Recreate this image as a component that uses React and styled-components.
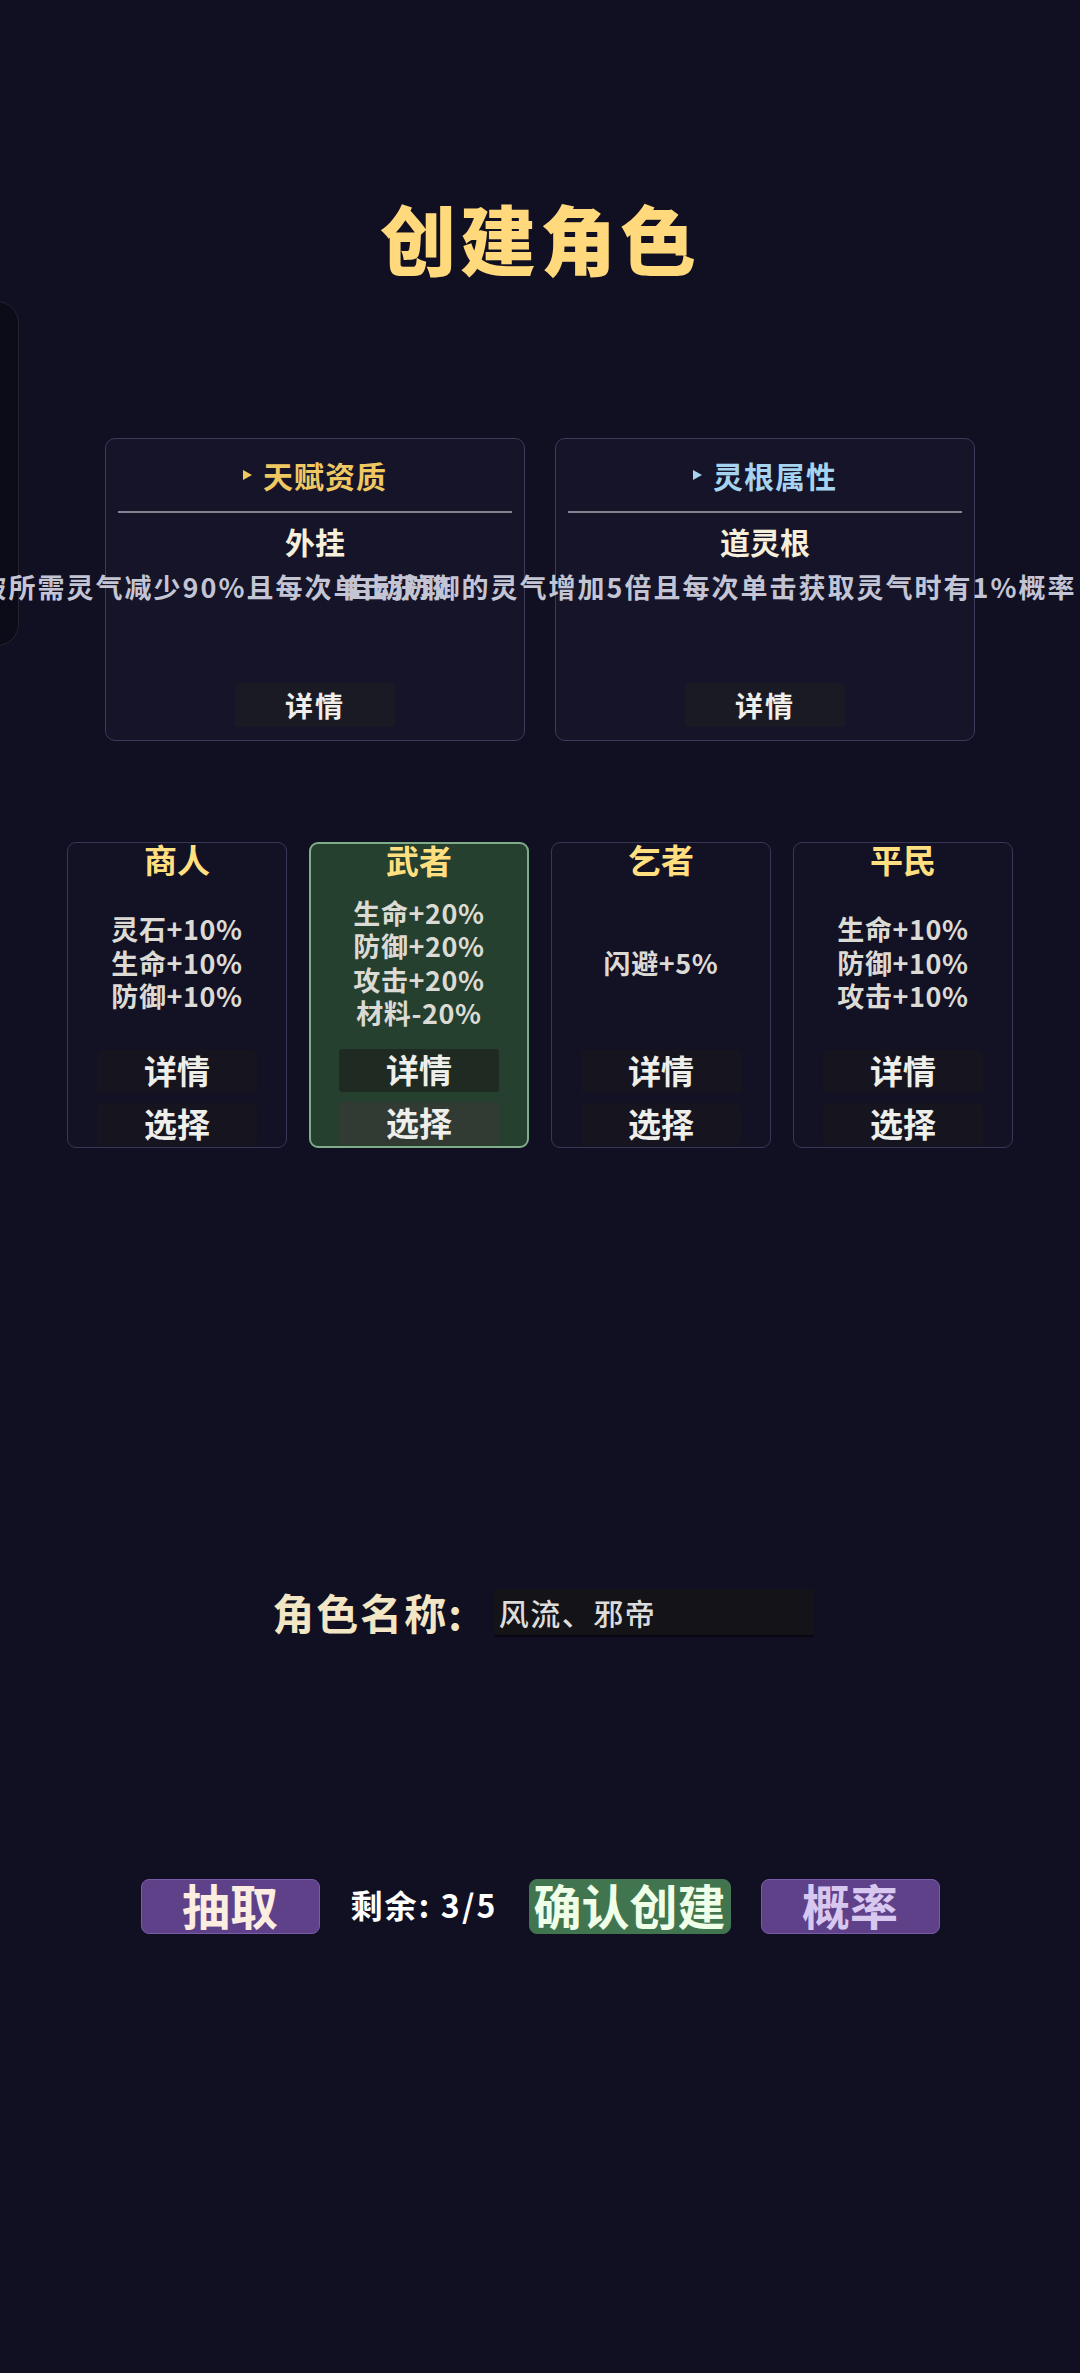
import styled, { createGlobalStyle } from 'styled-components';

const GlobalStyle = createGlobalStyle`
  html, body {
    margin: 0;
    padding: 0;
    background: #110f22;
    overflow-x: hidden;
  }
  * { box-sizing: border-box; }
`;

const Page = styled.div`
  position: relative;
  width: 1080px;
  height: 2373px;
  padding-top: 190px;
  overflow: hidden;
  background: #110f22;
  font-family: "Noto Sans CJK SC", "Noto Sans", sans-serif;
`;

const SidePanel = styled.div`
  position: absolute;
  left: -280px;
  top: 301px;
  width: 299px;
  height: 345px;
  border: 1px solid #24232f;
  border-radius: 22px;
  background: linear-gradient(90deg, #07060f, #0c0b18);
`;

const Title = styled.h1`
  margin: 0;
  height: 100px;
  line-height: 94px;
  text-align: center;
  font-size: 76px;
  font-weight: 900;
  letter-spacing: 4px;
  color: #ffd97c;
`;

const TalentGrid = styled.div`
  display: grid;
  grid-template-columns: 420px 420px;
  gap: 30px;
  justify-content: center;
  margin-top: 148px;
`;

const TalentCard = styled.section`
  display: flex;
  flex-direction: column;
  height: 303px;
  padding: 0 12px 13px;
  background: #161429;
  border: 1px solid #3d3a5a;
  border-radius: 10px;
`;

const TalentHead = styled.div`
  display: flex;
  align-items: center;
  justify-content: center;
  gap: 11px;
  height: 74px;
  border-bottom: 2px solid #85838f;
  font-size: 30px;
  font-weight: 700;
  letter-spacing: 1px;
  color: ${(p) => p.$color};
`;

const Arrow = styled.span`
  width: 0;
  height: 0;
  border-left: 9px solid ${(p) => p.$color};
  border-top: 5px solid transparent;
  border-bottom: 5px solid transparent;
`;

const TalentName = styled.div`
  margin-top: 8px;
  line-height: 40px;
  text-align: center;
  font-size: 30px;
  font-weight: 700;
  color: #f5efdc;
`;

const TalentDesc = styled.div`
  display: flex;
  justify-content: center;
  margin-top: 6px;
  line-height: 40px;
  font-size: 27px;
  font-weight: 600;
  letter-spacing: 2px;
  white-space: nowrap;
  color: #c3c5d4;
`;

const DescText = styled.span`
  flex: none;
  transform: translateX(${(p) => p.$shift}px);
`;

const TalentButton = styled.button`
  align-self: center;
  margin-top: auto;
  width: 160px;
  height: 44px;
  padding: 0;
  border: 0;
  border-radius: 3px;
  background: #1a1a24;
  font-family: inherit;
  font-size: 28px;
  font-weight: 600;
  letter-spacing: 2px;
  color: #eeeeea;
`;

const ClassGrid = styled.div`
  display: grid;
  grid-template-columns: repeat(4, 220px);
  gap: 22px;
  justify-content: center;
  margin-top: 101px;
`;

const ClassCard = styled.section`
  display: flex;
  flex-direction: column;
  align-items: center;
  height: 306px;
  padding-bottom: 1px;
  background: ${(p) => (p.$selected ? '#25402e' : '#131225')};
  border: ${(p) => (p.$selected ? '2px solid #80ad88' : '1px solid #393756')};
  border-radius: 9px;
`;

const ClassName = styled.h2`
  margin: 0;
  height: 38px;
  line-height: 32px;
  font-size: 33px;
  font-weight: 700;
  color: #ffdf80;
`;

const Stats = styled.div`
  display: flex;
  flex: 1;
  flex-direction: column;
  justify-content: center;
  align-items: center;
  padding-bottom: 6px;
  font-size: 27px;
  font-weight: 600;
  letter-spacing: 0.6px;
  line-height: 33.5px;
  color: #dcdad4;
`;

const ClassButton = styled.button`
  width: 160px;
  height: 43px;
  padding: 0 0 2px;
  border: 0;
  border-radius: 3px;
  background: ${(p) => p.$bg};
  font-family: inherit;
  font-size: 33px;
  font-weight: 600;
  line-height: 41px;
  color: #eeeeea;

  & + & {
    margin-top: 10px;
  }
`;

const NameRow = styled.div`
  display: flex;
  justify-content: center;
  align-items: center;
  gap: 30px;
  margin-top: 441px;
  padding-left: 6px;
`;

const NameLabel = styled.label`
  padding-bottom: 2px;
  font-size: 42px;
  font-weight: 700;
  letter-spacing: 2px;
  line-height: 46px;
  color: #f2e6c4;
`;

const NameInput = styled.input`
  width: 320px;
  height: 48px;
  padding: 0 5px;
  border: 0;
  border-bottom: 2px solid #08070f;
  border-radius: 3px;
  background: #141318;
  font-family: inherit;
  font-size: 30px;
  font-weight: 500;
  letter-spacing: 1.5px;
  color: #dcdcdc;
  outline: none;
`;

const ActionRow = styled.div`
  display: flex;
  justify-content: center;
  align-items: center;
  gap: 30px;
  margin-top: 242px;
`;

const ActionButton = styled.button`
  width: ${(p) => p.$width}px;
  height: 55px;
  padding: 0 0 6px;
  border: 1px solid ${(p) => p.$border};
  border-radius: 8px;
  background: ${(p) => p.$bg};
  font-family: inherit;
  font-size: 48px;
  font-weight: 700;
  line-height: 49px;
  white-space: nowrap;
  color: ${(p) => p.$color};
`;

const Remaining = styled.span`
  width: 149px;
  padding-bottom: 6px;
  text-align: center;
  font-size: 32px;
  font-weight: 700;
  letter-spacing: 2.2px;
  white-space: nowrap;
  color: #ffffff;
`;

const talents = [
  {
    head: '天赋资质',
    color: '#f0c862',
    name: '外挂',
    desc: '突破所需灵气减少90%且每次单击获取',
    shift: -115,
  },
  {
    head: '灵根属性',
    color: '#a5d3f0',
    name: '道灵根',
    desc: '自动防御的灵气增加5倍且每次单击获取灵气时有1%概率',
    shift: -54,
  },
];

const classes = [
  { name: '商人', stats: ['灵石+10%', '生命+10%', '防御+10%'] },
  { name: '武者', stats: ['生命+20%', '防御+20%', '攻击+20%', '材料-20%'], selected: true },
  { name: '乞者', stats: ['闪避+5%'] },
  { name: '平民', stats: ['生命+10%', '防御+10%', '攻击+10%'] },
];

export default function App() {
  return (
    <Page>
      <GlobalStyle />
      <SidePanel />
      <Title>创建角色</Title>

      <TalentGrid>
        {talents.map((t) => (
          <TalentCard key={t.head}>
            <TalentHead $color={t.color}>
              <Arrow $color={t.color} />
              {t.head}
            </TalentHead>
            <TalentName>{t.name}</TalentName>
            <TalentDesc>
              <DescText $shift={t.shift}>{t.desc}</DescText>
            </TalentDesc>
            <TalentButton>详情</TalentButton>
          </TalentCard>
        ))}
      </TalentGrid>

      <ClassGrid>
        {classes.map((c) => (
          <ClassCard key={c.name} $selected={c.selected}>
            <ClassName>{c.name}</ClassName>
            <Stats>
              {c.stats.map((s) => (
                <div key={s}>{s}</div>
              ))}
            </Stats>
            <ClassButton $bg={c.selected ? '#1f2b22' : '#15141f'}>详情</ClassButton>
            <ClassButton $bg={c.selected ? '#323a34' : '#15141f'}>选择</ClassButton>
          </ClassCard>
        ))}
      </ClassGrid>

      <NameRow>
        <NameLabel>角色名称:</NameLabel>
        <NameInput defaultValue="风流、邪帝" />
      </NameRow>

      <ActionRow>
        <ActionButton $width={179} $bg="#5f4189" $border="#7a5ba8" $color="#fbeee0">抽取</ActionButton>
        <Remaining>剩余: 3/5</Remaining>
        <ActionButton $width={202} $bg="#417550" $border="#417550" $color="#efffe8">确认创建</ActionButton>
        <ActionButton $width={179} $bg="#5f4189" $border="#7a5ba8" $color="#d8c8f0">概率</ActionButton>
      </ActionRow>
    </Page>
  );
}
